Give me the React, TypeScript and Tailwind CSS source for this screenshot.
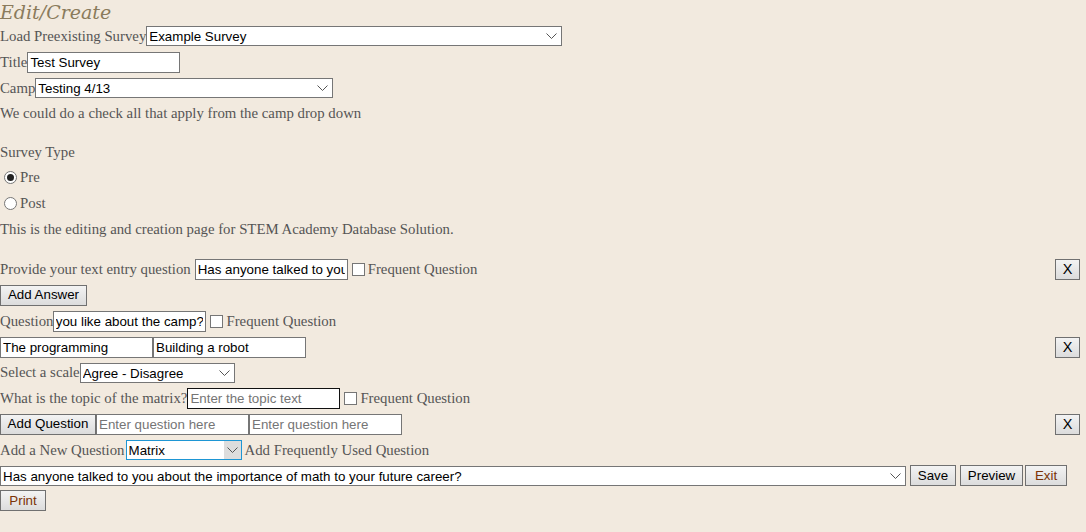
import React, { useEffect, useRef } from 'react';

const serif = "font-['Georgia','Liberation_Serif',serif]";
const sans = "font-['Arial','Liberation_Sans',sans-serif]";

const inputCls = `${sans} h-[21px] w-[153px] border bg-white px-[2px] text-[13.33px] text-black outline-none placeholder:text-[#757575]`;
const btnCls = `${sans} h-[21px] border border-[#707070] bg-gradient-to-b from-[#f3f3f3] to-[#dcdcdc] px-[6px] text-[13.33px] leading-none`;

const Chevron: React.FC<{ className?: string }> = ({ className }) => (
    <svg width="11" height="6" viewBox="0 0 11 6" className={className} fill="none">
        <path d="M0.5 0.5 L5.5 5.5 L10.5 0.5" stroke="#555" strokeWidth="1" />
    </svg>
);

const Select: React.FC<{ value: string; width: string; focused?: boolean }> = ({ value, width, focused }) => (
    <span className={`relative inline-flex h-[20px] items-center ${width}`}>
        <select
            defaultValue={value}
            className={`${sans} h-full w-full appearance-none border bg-white pl-[2px] text-[13.33px] text-black outline-none ${
                focused ? 'border-[#1e96d4]' : 'border-[#767676]'
            }`}
        >
            <option>{value}</option>
        </select>
        {focused ? (
            <span className="pointer-events-none absolute right-px top-px flex h-[18px] w-[17px] items-center justify-center bg-[#dddddd]">
                <Chevron />
            </span>
        ) : (
            <Chevron className="pointer-events-none absolute right-[5px] top-[7px]" />
        )}
    </span>
);

// scrolled to the end, like a field the user just typed in
const ScrolledInput: React.FC<{ value: string }> = ({ value }) => {
    const ref = useRef<HTMLInputElement>(null);
    useEffect(() => {
        if (ref.current) ref.current.scrollLeft = ref.current.scrollWidth;
    }, []);
    return <input ref={ref} className={`${inputCls} border-[#767676]`} defaultValue={value} />;
};

const Checkbox: React.FC = () => (
    <span className="ml-[4px] mr-[3px] inline-block h-[13px] w-[13px] border border-[#767676] bg-white" />
);

const Radio: React.FC<{ checked?: boolean }> = ({ checked }) => (
    <span className="ml-[4px] mr-[3px] inline-flex h-[13px] w-[13px] items-center justify-center rounded-full border border-[#767676] bg-white">
        {checked && <span className="h-[7px] w-[7px] rounded-full bg-[#222]" />}
    </span>
);

const XButton: React.FC = () => (
    <button className={`${btnCls} w-[25px] px-0 text-[14.5px] text-black`}>X</button>
);

const Row: React.FC<{ children: React.ReactNode; className?: string }> = ({ children, className }) => (
    <div className={`flex items-center whitespace-nowrap ${className || 'h-[26px]'}`}>{children}</div>
);

export default function App() {
    return (
        <div className={`${serif} min-h-[532px] w-full bg-[#f2eadf] text-[14.8px] text-[#555]`}>
            <h2 className="h-[23px] font-['DejaVu_Serif',serif] text-[19px] leading-[24px] italic text-[#8a7b5c]">
                Edit/Create
            </h2>

            <Row>
                <span>Load Preexisting Survey</span>
                <Select value="Example Survey" width="w-[416px]" />
            </Row>
            <Row>
                <span>Title</span>
                <input className={`${inputCls} border-[#767676]`} defaultValue="Test Survey" />
            </Row>
            <Row>
                <span>Camp</span>
                <Select value="Testing 4/13" width="w-[298px]" />
            </Row>
            <Row className="h-[25px]">We could do a check all that apply from the camp drop down</Row>

            <Row className="mt-[14px] h-[24px]">Survey Type</Row>
            <Row className="h-[26px]">
                <Radio checked />
                <span>Pre</span>
            </Row>
            <Row className="h-[26px]">
                <Radio />
                <span>Post</span>
            </Row>
            <Row className="h-[27px]">This is the editing and creation page for STEM Academy Database Solution.</Row>

            <Row className="mt-[14px] h-[25px] justify-between pr-[6px]">
                <div className="flex items-center">
                    <span className="mr-[4px]">Provide your text entry question</span>
                    <input
                        className={`${inputCls} border-[#767676]`}
                        defaultValue="Has anyone talked to you about the importance of math to your future career?"
                    />
                    <Checkbox />
                    <span>Frequent Question</span>
                </div>
                <XButton />
            </Row>
            <Row className="h-[26px]">
                <button className={`${btnCls} w-[87px] text-black`}>Add Answer</button>
            </Row>
            <Row>
                <span>Question</span>
                <ScrolledInput value="What did you like about the camp?" />
                <Checkbox />
                <span>Frequent Question</span>
            </Row>
            <Row className="h-[26px] justify-between pr-[6px]">
                <div className="flex items-center">
                    <input className={`${inputCls} border-[#767676]`} defaultValue="The programming" />
                    <input className={`${inputCls} border-[#767676]`} defaultValue="Building a robot" />
                </div>
                <XButton />
            </Row>
            <Row className="h-[25px]">
                <span>Select a scale</span>
                <Select value="Agree - Disagree" width="w-[155px]" />
            </Row>
            <Row>
                <span>What is the topic of the matrix?</span>
                <input className={`${inputCls} border-[#111]`} placeholder="Enter the topic text" />
                <Checkbox />
                <span>Frequent Question</span>
            </Row>
            <Row className="h-[26px] justify-between pr-[6px]">
                <div className="flex items-center">
                    <button className={`${btnCls} w-[96px] text-black`}>Add Question</button>
                    <input className={`${inputCls} border-[#767676]`} placeholder="Enter question here" />
                    <input className={`${inputCls} border-[#767676]`} placeholder="Enter question here" />
                </div>
                <XButton />
            </Row>
            <Row>
                <span className="mr-[1px]">Add a New Question</span>
                <Select value="Matrix" width="w-[116px]" focused />
                <span className="ml-[3px]">Add Frequently Used Question</span>
            </Row>
            <Row className="h-[25px]">
                <Select
                    value="Has anyone talked to you about the importance of math to your future career?"
                    width="w-[906px]"
                />
                <button className={`${btnCls} ml-[4px] w-[46px] text-black`}>Save</button>
                <button className={`${btnCls} ml-[4px] w-[63px] text-black`}>Preview</button>
                <button className={`${btnCls} ml-[2px] w-[42px]`}>
                    <span className="text-amber-900">Exit</span>
                </button>
            </Row>
            <Row className="h-[25px]">
                <button className={`${btnCls} w-[46px]`}>
                    <span className="text-amber-900">Print</span>
                </button>
            </Row>
        </div>
    );
}
